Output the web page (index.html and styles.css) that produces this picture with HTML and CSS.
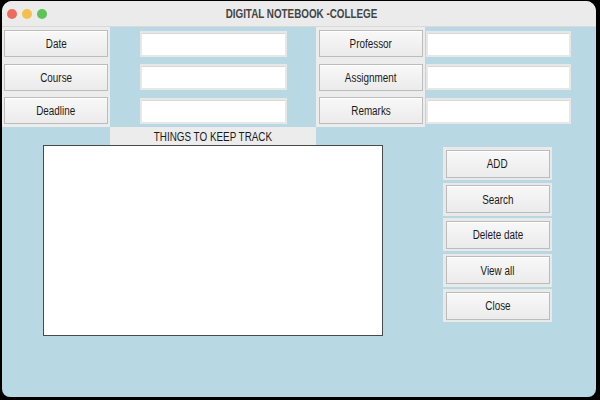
FILE: index.html
```html
<!DOCTYPE html>
<html>
<head>
<meta charset="utf-8">
<link rel="stylesheet" href="styles.css">
</head>
<body>
<div class="window">
  <div class="titlebar">
    <div class="lights">
      <span class="light red"></span>
      <span class="light yellow"></span>
      <span class="light green"></span>
    </div>
    <div class="title"><span class="t">DIGITAL NOTEBOOK -COLLEGE</span></div>
  </div>
  <div class="content">
    <div class="form">
      <div class="labels">
        <div class="btn"><span class="t">Date</span></div>
        <div class="btn"><span class="t">Course</span></div>
        <div class="btn"><span class="t">Deadline</span></div>
      </div>
      <div class="entries first">
        <div class="entry"></div>
        <div class="entry"></div>
        <div class="entry"></div>
      </div>
      <div class="labels second">
        <div class="btn"><span class="t">Professor</span></div>
        <div class="btn"><span class="t">Assignment</span></div>
        <div class="btn"><span class="t">Remarks</span></div>
      </div>
      <div class="entries last">
        <div class="entry"></div>
        <div class="entry"></div>
        <div class="entry"></div>
      </div>
    </div>
    <div class="caption"><span class="t">THINGS TO KEEP TRACK</span></div>
    <div class="lower">
      <div class="textbox"></div>
      <div class="actions">
        <div class="frame"><div class="btn"><span class="t">ADD</span></div></div>
        <div class="frame"><div class="btn"><span class="t">Search</span></div></div>
        <div class="frame"><div class="btn"><span class="t">Delete date</span></div></div>
        <div class="frame"><div class="btn"><span class="t">View all</span></div></div>
        <div class="frame"><div class="btn"><span class="t">Close</span></div></div>
      </div>
    </div>
  </div>
</div>
</body>
</html>
```

FILE: styles.css
```css
html, body {
  margin: 0;
  padding: 0;
  background: #000;
  width: 600px;
  height: 400px;
  overflow: hidden;
}
body {
  font-family: "Liberation Sans", Arial, sans-serif;
  font-size: 12.5px;
  color: #1a1a1a;
}
.t {
  display: inline-block;
  white-space: nowrap;
  transform: scaleX(0.79);
  margin-top: 1px;
}
.window {
  margin: 1px 0 0 2px;
  width: 594px;
  height: 396px;
  border-radius: 10px 10px 8px 8px;
  overflow: hidden;
  background: #b8d8e3;
  display: flex;
  flex-direction: column;
}
.titlebar {
  height: 25px;
  flex: none;
  background: #ebebeb;
  border-bottom: 1px solid #d9d9d9;
  display: flex;
  align-items: center;
}
.lights {
  display: flex;
  gap: 5px;
  padding-left: 5px;
  margin-top: 1px;
}
.light {
  width: 10px;
  height: 10px;
  border-radius: 50%;
  display: block;
}
.red { background: #ed6a5e; }
.yellow { background: #f5bf4f; }
.green { background: #5fc454; }
.title {
  flex: 1;
  text-align: center;
  font-weight: bold;
  font-size: 12px;
  color: #444;
  margin-left: -40px;
}
.title .t {
  transform: scaleX(0.82);
}
.content {
  flex: 1;
  display: flex;
  flex-direction: column;
}
.form {
  display: flex;
  height: 100px;
}
.labels {
  width: 108px;
  background: #ececec;
  display: flex;
  flex-direction: column;
  gap: 6.5px;
  padding: 3px 2px 0 2px;
  box-sizing: border-box;
}
.labels.second {
  width: 109px;
  padding: 3px 2px 0 3px;
}
.btn {
  height: 27px;
  box-sizing: border-box;
  border: 1px solid #bcbcbc;
  background: linear-gradient(#f8f8f8, #ebebeb);
  box-shadow: inset 0 1px 0 #fff;
  display: flex;
  align-items: center;
  justify-content: center;
  color: #1a1a1a;
}
.entries {
  display: flex;
  flex-direction: column;
  gap: 7.3px;
  padding-top: 4px;
  box-sizing: border-box;
}
.entries.first {
  width: 147px;
  margin: 0 29px 0 30px;
}
.entries.last {
  width: 145px;
  margin-left: 1px;
}
.entry {
  height: 26px;
  box-sizing: border-box;
  background: #fff;
  border: 2px solid #e7e7e7;
  box-shadow: inset 0 1px 0 #d8d8d8;
}
.caption {
  margin-left: 108px;
  width: 206px;
  height: 18px;
  background: #ececec;
  display: flex;
  align-items: center;
  justify-content: center;
  color: #1a1a1a;
}
.lower {
  display: flex;
  align-items: flex-start;
}
.textbox {
  margin-left: 41px;
  width: 340px;
  height: 191px;
  box-sizing: border-box;
  background: #fff;
  border: 1px solid #4a4a4a;
}
.actions {
  margin-left: 60px;
  margin-top: 2px;
  width: 109px;
  display: flex;
  flex-direction: column;
  gap: 2.6px;
}
.frame {
  height: 33px;
  box-sizing: border-box;
  background: #e9e9e9;
  padding: 2.5px;
}
.frame .btn {
  height: 28px;
}
```
